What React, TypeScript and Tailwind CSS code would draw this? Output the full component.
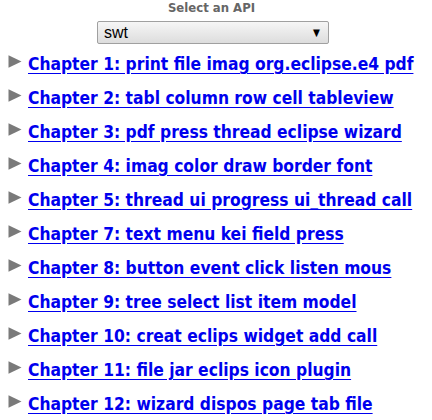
import React from "react";

const chapters = [
  "Chapter 1: print file imag org.eclipse.e4 pdf",
  "Chapter 2: tabl column row cell tableview",
  "Chapter 3: pdf press thread eclipse wizard",
  "Chapter 4: imag color draw border font",
  "Chapter 5: thread ui progress ui_thread call",
  "Chapter 7: text menu kei field press",
  "Chapter 8: button event click listen mous",
  "Chapter 9: tree select list item model",
  "Chapter 10: creat eclips widget add call",
  "Chapter 11: file jar eclips icon plugin",
  "Chapter 12: wizard dispos page tab file",
];

function Arrow() {
  return (
    <svg width="14" height="13" viewBox="0 0 14 13" className="shrink-0">
      <polygon points="0.5,0.3 13.5,6.5 0.5,12.7" fill="#7a7a7a" />
    </svg>
  );
}

export default function App() {
  return (
    <div className="w-[432px] h-[420px] overflow-hidden bg-white" style={{ fontFamily: '"DejaVu Sans Condensed", "DejaVu Sans", sans-serif' }}>
      <div className="flex flex-col items-center pr-[6px]">
        <div className="text-[13px] leading-[15px] text-[#666] font-bold mr-[3px]">Select an API</div>
        <div className="mt-[6px] w-[232px] h-[23px] border border-[#a0a0a0] rounded-[2px] bg-gradient-to-b from-[#f6f6f6] to-[#dddddd] flex items-center justify-between pl-[6px] pr-[8px]">
          <span className="text-[16px] leading-none text-black" style={{ fontFamily: '"Liberation Sans", Arial, sans-serif' }}>swt</span>
          <span className="text-[10px] leading-none text-black">▼</span>
        </div>
      </div>
      <div className="mt-[10px] flex flex-col gap-[12px] pl-[8px]">
        {chapters.map((c) => (
          <div key={c} className="flex items-start gap-[6px] h-[22px]">
            <div className="mt-[1px]"><Arrow /></div>
            <a href="#" className="text-[17.3px] leading-[21px] font-bold text-[#0000ee] underline underline-offset-[3px] whitespace-nowrap">{c}</a>
          </div>
        ))}
      </div>
    </div>
  );
}
